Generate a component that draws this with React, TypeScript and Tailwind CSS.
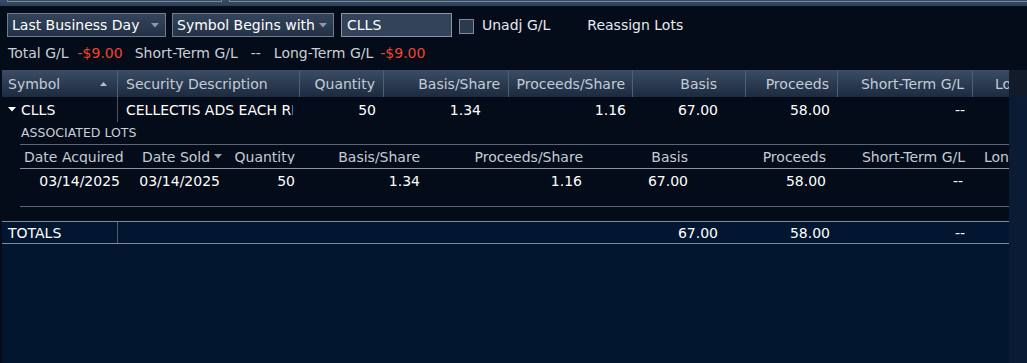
import React from 'react';

type Col = { label: string; w: number; align: 'left' | 'right'; pr?: number };

const mainCols: Col[] = [
  { label: 'Symbol', w: 116, align: 'left' },
  { label: 'Security Description', w: 182, align: 'left' },
  { label: 'Quantity', w: 84, align: 'right', pr: 8 },
  { label: 'Basis/Share', w: 125, align: 'right', pr: 8 },
  { label: 'Proceeds/Share', w: 124, align: 'right', pr: 7 },
  { label: 'Basis', w: 113, align: 'right', pr: 28 },
  { label: 'Proceeds', w: 92, align: 'right', pr: 8 },
  { label: 'Short-Term G/L', w: 135, align: 'right', pr: 8 },
  { label: 'Long-Term G/L', w: 36, align: 'left' },
];

// associated lots sub grid, starts at x=20
const lotCols = [
  { label: 'Date Acquired', w: 108 },
  { label: 'Date Sold', w: 98 },
  { label: 'Quantity', w: 74 },
  { label: 'Basis/Share', w: 125 },
  { label: 'Proceeds/Share', w: 163 },
  { label: 'Basis', w: 105 },
  { label: 'Proceeds', w: 138 },
  { label: 'Short-Term G/L', w: 139 },
  { label: 'Long-Term G/L', w: 39 },
];

function Caret({ color = '#9aa3ae' }: { color?: string }) {
  return (
    <svg width="8" height="5" viewBox="0 0 8 5" className="shrink-0">
      <path d="M0 0h8L4 4.5z" fill={color} />
    </svg>
  );
}

function Dropdown({ label, w }: { label: string; w: number }) {
  return (
    <div
      className="flex h-[24px] items-center justify-between border border-[#6d7b8e] bg-gradient-to-b from-[#34445a] to-[#233247] pl-[4px] pr-[6px] text-white"
      style={{ width: w }}
    >
      <span className="whitespace-nowrap">{label}</span>
      <Caret color="#8e98a5" />
    </div>
  );
}

export default function App() {
  return (
    <div
      className="flex h-[363px] w-[1027px] flex-col overflow-hidden bg-[#040c19] text-[14px] leading-none text-white"
      style={{ fontFamily: '"DejaVu Sans", Verdana, sans-serif' }}
    >
      {/* cut-off panel above */}
      <div className="flex h-[6px] shrink-0 gap-[7px] bg-gradient-to-b from-[#3a4c65] to-[#2f405a] pl-[7px]">
        <div className="h-[2px] w-[215px] border-x border-b border-[#7a8799]" />
        <div className="h-[2px] flex-1 border-b border-l border-[#7a8799]" />
      </div>

      {/* toolbar */}
      <div className="mt-[7px] flex h-[24px] shrink-0 items-center pl-[7px]">
        <Dropdown label="Last Business Day" w={159} />
        <div className="w-[6px]" />
        <Dropdown label="Symbol Begins with" w={162} />
        <div className="w-[7px]" />
        <div className="flex h-[24px] w-[111px] items-center border border-[#8795a6] bg-[#33435a] pl-[5px]">
          CLLS
        </div>
        <div className="ml-[7px] mt-[2px] h-[15px] w-[15px] border border-[#7d8999] bg-[#2b3a4f]" />
        <span className="ml-[8px] text-[#e6eaef]">Unadj G/L</span>
        <span className="ml-[37px] text-[#e6eaef]">Reassign Lots</span>
      </div>

      {/* summary */}
      <div className="mt-[8px] flex h-[16px] shrink-0 items-center whitespace-nowrap pl-[8px] text-[#c9d0d8]">
        <span>Total G/L</span>
        <span className="ml-[9px] text-[#f2452c]">-$9.00</span>
        <span className="ml-[12px]">Short-Term G/L</span>
        <span className="ml-[13px]">--</span>
        <span className="ml-[13px]">Long-Term G/L</span>
        <span className="ml-[7px] text-[#f2452c]">-$9.00</span>
      </div>

      {/* table */}
      <div className="mt-[9px] flex min-h-0 flex-1">
        <div className="ml-[2px] flex w-[1007px] flex-col overflow-hidden">
          {/* header */}
          <div className="flex h-[27px] shrink-0 bg-gradient-to-b from-[#3b4c64] to-[#1d2b40] text-[#c4ccd6]">
            {mainCols.map((c, i) => (
              <div
                key={c.label}
                className={`flex shrink-0 items-center overflow-hidden whitespace-nowrap ${
                  i < mainCols.length - 1 ? 'border-r border-[#4d6079]' : ''
                } ${i === 0 ? 'justify-between pr-[10px]' : c.align === 'right' ? 'justify-end' : 'justify-start'}`}
                style={{
                  width: c.w,
                  paddingRight: c.pr,
                  paddingLeft: i === 0 ? 6 : i === 1 ? 8 : i === 8 ? 22 : 0,
                }}
              >
                {c.label}
                {i === 0 && (
                  <svg width="7" height="4" viewBox="0 0 7 4">
                    <path d="M0 4h7L3.5 0z" fill="#b9c1cc" />
                  </svg>
                )}
              </div>
            ))}
          </div>

          {/* main row */}
          <div className="flex h-[25px] shrink-0 items-center">
            <div className="flex h-full w-[116px] items-center gap-[5px] border-r border-[#4a5568] pl-[6px]">
              <Caret color="#ffffff" />
              <span>CLLS</span>
            </div>
            <div className="w-[182px] pl-[8px] pr-[7px]">
              <div className="overflow-hidden whitespace-nowrap">CELLECTIS ADS EACH REPR 1 ORD</div>
            </div>
            <Cell w={84} pr={8}>50</Cell>
            <Cell w={125} pr={28}>1.34</Cell>
            <Cell w={124} pr={7}>1.16</Cell>
            <Cell w={113} pr={28}>67.00</Cell>
            <Cell w={92} pr={8}>58.00</Cell>
            <Cell w={135} pr={8}>--</Cell>
          </div>

          {/* associated lots */}
          <div className="ml-[18px] flex flex-col">
            <div className="flex h-[23px] items-end border-b border-[#5b6578] pb-[5px] pl-[1px] text-[12.5px] text-[#c9d0d8]">
              ASSOCIATED LOTS
            </div>
            <div className="flex h-[24px] items-center border-b border-[#8a92a0] text-[#c4ccd6]">
              {lotCols.map((c, i) => (
                <div
                  key={c.label}
                  className={`flex shrink-0 items-center gap-[4px] overflow-hidden whitespace-nowrap ${
                    i < 2 || i === 8 ? 'justify-start' : 'justify-end pr-[5px]'
                  }`}
                  style={{ width: c.w, paddingLeft: i === 0 ? 4 : i === 1 ? 14 : i === 8 ? 14 : 0 }}
                >
                  {c.label}
                  {i === 1 && <Caret color="#9aa3ae" />}
                </div>
              ))}
            </div>
            <div className="flex h-[23px] items-center">
              <Cell w={108} pr={8}>03/14/2025</Cell>
              <Cell w={98} pr={6}>03/14/2025</Cell>
              <Cell w={74} pr={5}>50</Cell>
              <Cell w={125} pr={5}>1.34</Cell>
              <Cell w={163} pr={6}>1.16</Cell>
              <Cell w={105} pr={5}>67.00</Cell>
              <Cell w={138} pr={5}>58.00</Cell>
              <Cell w={139} pr={7}>--</Cell>
            </div>
            <div className="mt-[14px] h-[15px] border-t border-[#5b6578]" />
          </div>

          {/* totals */}
          <div className="flex h-[23px] shrink-0 items-center border-y border-[#7d8899] bg-[#011731]">
            <div className="flex h-full w-[116px] items-center border-r border-[#4f5b70] pl-[6px] pt-[1px]">TOTALS</div>
            <div className="w-[182px]" />
            <Cell w={84} pr={8}>{''}</Cell>
            <Cell w={125} pr={28}>{''}</Cell>
            <Cell w={124} pr={7}>{''}</Cell>
            <Cell w={113} pr={28}>67.00</Cell>
            <Cell w={92} pr={8}>58.00</Cell>
            <Cell w={135} pr={8}>--</Cell>
          </div>
          <div className="flex-1 bg-[#021630]" />
        </div>

        {/* scrollbar strip */}
        <div className="flex w-[18px] flex-col">
          <div className="h-[27px] bg-[#121b29]" />
          <div className="flex-1 bg-[#0a1c35]" />
        </div>
      </div>
    </div>
  );
}

function Cell({ w, pr, children }: { w: number; pr: number; children: React.ReactNode }) {
  return (
    <div className="shrink-0 overflow-hidden whitespace-nowrap text-right" style={{ width: w, paddingRight: pr }}>
      {children}
    </div>
  );
}
